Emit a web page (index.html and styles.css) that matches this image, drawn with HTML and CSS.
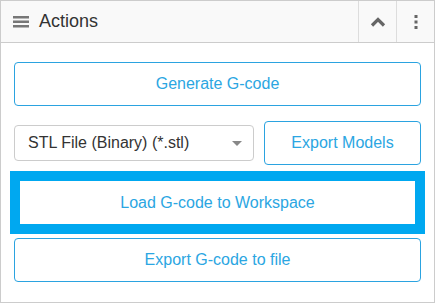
FILE: index.html
```html
<!DOCTYPE html>
<html lang="en">
<head>
	<meta charset="UTF-8" />
	<title>Actions</title>
	<link rel="stylesheet" href="styles.css">
</head>
<body>
	<!-- Panel -->
	<section class="panel">
		<header class="panel-head">
			<div class="panel-title">
				<svg class="menu-icon" width="16" height="12" viewBox="0 0 16 12">
					<rect x="0" y="0" width="16" height="2.5" fill="#777" />
					<rect x="0" y="4.5" width="16" height="2.5" fill="#777" />
					<rect x="0" y="9" width="16" height="2.5" fill="#777" />
				</svg>
				<span>Actions</span>
			</div>
			<button class="head-btn">
				<svg width="16" height="10" viewBox="0 0 16 10">
					<path d="M2 8.5 L8 2.5 L14 8.5" fill="none" stroke="#666" stroke-width="3.2" />
				</svg>
			</button>
			<button class="head-btn">
				<svg width="4" height="14" viewBox="0 0 4 14">
					<rect x="0.5" y="0" width="3" height="3" fill="#666" />
					<rect x="0.5" y="5.5" width="3" height="3" fill="#666" />
					<rect x="0.5" y="11" width="3" height="3" fill="#666" />
				</svg>
			</button>
		</header>

		<div class="panel-body">
			<button class="btn">Generate G-code</button>

			<div class="export-row">
				<div class="select">
					<span>STL File (Binary) (*.stl)</span>
					<span class="caret"></span>
				</div>
				<button class="btn btn-small">Export Models</button>
			</div>

			<button class="btn btn-focus">Load G-code to Workspace</button>
			<button class="btn btn-last">Export G-code to file</button>
		</div>
	</section>
	<!-- End of Panel -->
</body>
</html>
```
FILE: styles.css
```css
* {
	margin: 0;
	padding: 0;
	box-sizing: border-box;
	font-family: "Liberation Sans", Arial, sans-serif;
}

body {
	background: #fff;
}

.panel {
	width: 435px;
	height: 303px;
	border: 1px solid #ccc;
	background: #fff;
}

.panel-head {
	display: flex;
	height: 42px;
	background: #f9f9f9;
	border-bottom: 1px solid #ccc;
}

.panel-title {
	flex: 1;
	display: flex;
	align-items: center;
	padding-left: 12px;
	font-size: 18px;
	color: #333;
}

.menu-icon {
	margin-right: 10px;
}

.head-btn {
	width: 38px;
	display: flex;
	align-items: center;
	justify-content: center;
	background: transparent;
	border: none;
	border-left: 1px solid #ddd;
}

.panel-body {
	padding: 19px 13px 0 13px;
	display: flex;
	flex-direction: column;
}

.btn {
	display: block;
	width: 100%;
	height: 44px;
	background: #fff;
	border: 1px solid #2ba3e0;
	border-radius: 4px;
	color: #2ba6e2;
	font-size: 16px;
}

.export-row {
	display: flex;
	align-items: center;
	margin-top: 15px;
}

.select {
	flex: 0 0 240px;
	height: 36px;
	display: flex;
	align-items: center;
	justify-content: space-between;
	padding: 0 11px 0 13px;
	border: 1px solid #ccc;
	border-radius: 4px;
	font-size: 16px;
	color: #333;
}

.caret {
	width: 0;
	height: 0;
	border-left: 5px solid transparent;
	border-right: 5px solid transparent;
	border-top: 5px solid #888;
}

.btn-small {
	flex: 1;
	width: auto;
	margin-left: 10px;
}

.btn-focus {
	width: auto;
	height: 63px;
	margin: 6px -4px 0 -4px;
	border: 10px solid #00a8f0;
	border-radius: 0;
}

.btn-last {
	margin-top: 4px;
}
```
